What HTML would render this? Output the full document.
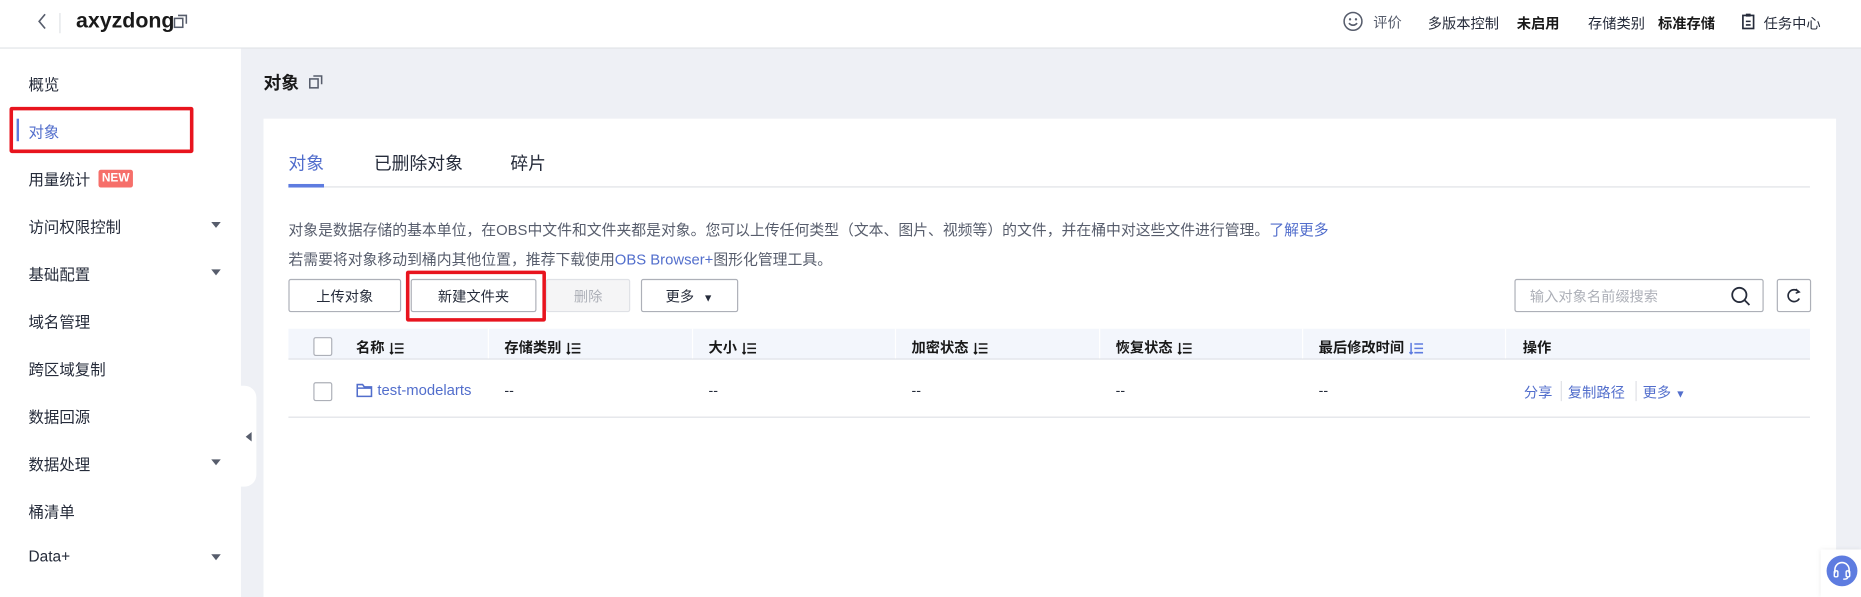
<!DOCTYPE html>
<html><head><meta charset="utf-8"><style>
html,body{margin:0;padding:0;width:1861px;height:597px;overflow:hidden;background:#eef0f5;}
#w{position:absolute;left:0;top:0;width:1568px;height:503px;transform:scale(1.18686);transform-origin:0 0;background:#eef0f5;font-family:"Liberation Sans","Noto Sans CJK SC",sans-serif;color:#252b3a;}
.a{position:absolute;white-space:nowrap;}
.hdr{left:0;top:0;width:1568px;height:40px;background:#fff;border-bottom:1px solid #dfe1e6;}
.side{left:0;top:41px;width:203px;height:462px;background:#fff;}
.si{position:absolute;left:24px;font-size:13px;color:#252b3a;}
.tri{position:absolute;left:178px;width:0;height:0;border-left:4px solid transparent;border-right:4px solid transparent;border-top:5px solid #575d6c;}
.card{left:222px;top:100px;width:1325px;height:403px;background:#fff;}
.btn{position:absolute;top:235px;height:28px;border:1px solid #adb0b8;border-radius:2px;background:#fff;font-size:12px;line-height:28px;text-align:center;color:#252b3a;box-sizing:border-box;}
.th{position:absolute;top:284px;font-size:12px;font-weight:bold;color:#191919;}
.dv{position:absolute;top:277px;width:1px;height:25px;background:#fff;}
.td{position:absolute;top:322px;font-size:12px;color:#252b3a;}
.lk{color:#526ecc;}
.sort{display:inline-block;vertical-align:middle;margin-left:4px;}
</style></head><body><div id="w">
<div class="a hdr"></div>
<svg class="a" style="left:30px;top:11px" width="12" height="14" viewBox="0 0 12 14"><path d="M8 1L3 7l5 6" fill="none" stroke="#575d6c" stroke-width="1.4"/></svg>
<div class="a" style="left:50px;top:11px;width:1px;height:17px;background:#dfe1e6"></div>
<div class="a" style="left:64px;top:7px;font-size:18px;font-weight:bold;color:#191919">axyzdong</div>
<svg class="a" style="left:146px;top:12px" width="12" height="12" viewBox="0 0 12 12"><rect x="1" y="3.5" width="7" height="7.5" fill="none" stroke="#575d6c" stroke-width="1.3"/><path d="M4 1h7v7" fill="none" stroke="#575d6c" stroke-width="1.3"/></svg>
<svg class="a" style="left:1131px;top:9px" width="18" height="18" viewBox="0 0 18 18"><circle cx="9" cy="9" r="7.5" fill="none" stroke="#575d6c" stroke-width="1.3"/><circle cx="6.5" cy="7.3" r="1" fill="#575d6c"/><circle cx="11.5" cy="7.3" r="1" fill="#575d6c"/><path d="M5.5 10.5q3.5 3.5 7 0" fill="none" stroke="#575d6c" stroke-width="1.3"/></svg>
<div class="a" style="left:1157px;top:10px;font-size:12px;color:#575d6c">评价</div>
<div class="a" style="left:1203px;top:11px;font-size:12px">多版本控制</div>
<div class="a" style="left:1278px;top:11px;font-size:12px;font-weight:bold;color:#191919">未启用</div>
<div class="a" style="left:1338px;top:11px;font-size:12px">存储类别</div>
<div class="a" style="left:1397px;top:11px;font-size:12px;font-weight:bold;color:#191919">标准存储</div>
<svg class="a" style="left:1467px;top:11px" width="12" height="14" viewBox="0 0 12 14"><rect x="1.5" y="2" width="9" height="11" fill="none" stroke="#252b3a" stroke-width="1.4"/><rect x="4" y="0.5" width="4" height="2.5" fill="#252b3a"/><path d="M4 7h4M4 10h4" stroke="#252b3a" stroke-width="1.3"/></svg>
<div class="a" style="left:1486px;top:11px;font-size:12px">任务中心</div>

<div class="a side"></div>
<div class="si" style="top:61px">概览</div>
<div class="a" style="left:14px;top:100px;width:2px;height:19px;background:#5e7ce0"></div>
<div class="si" style="top:101px;color:#526ecc">对象</div>
<div class="a" style="left:8px;top:90px;width:149px;height:33px;border:3px solid #e8141e;border-radius:2px"></div>
<div class="si" style="top:141px">用量统计</div>
<div class="a" style="left:83px;top:143px;width:29px;height:15px;background:#f66f6a;border-radius:2px;color:#fff;font-size:10px;font-weight:bold;line-height:15px;text-align:center">NEW</div>
<div class="si" style="top:181px">访问权限控制</div><div class="tri" style="top:187px"></div>
<div class="si" style="top:221px">基础配置</div><div class="tri" style="top:227px"></div>
<div class="si" style="top:261px">域名管理</div>
<div class="si" style="top:301px">跨区域复制</div>
<div class="si" style="top:341px">数据回源</div>
<div class="si" style="top:381px">数据处理</div><div class="tri" style="top:387px"></div>
<div class="si" style="top:421px">桶清单</div>
<div class="si" style="top:461px">Data+</div><div class="tri" style="top:467px"></div>
<div class="a" style="left:200px;top:325px;width:16px;height:85px;background:#fff;border-radius:0 10px 10px 0"></div>
<div class="a" style="left:207px;top:364px;width:0;height:0;border-top:4px solid transparent;border-bottom:4px solid transparent;border-right:5px solid #575d6c"></div>

<div class="a" style="left:222px;top:59px;font-size:15px;font-weight:bold;color:#191919">对象</div>
<svg class="a" style="left:260px;top:63px" width="12" height="12" viewBox="0 0 12 12"><rect x="1" y="3.5" width="7" height="7.5" fill="none" stroke="#575d6c" stroke-width="1.3"/><path d="M4 1h7v7" fill="none" stroke="#575d6c" stroke-width="1.3"/></svg>

<div class="a card"></div>
<div class="a" style="left:243px;top:127px;font-size:15px;color:#526ecc">对象</div>
<div class="a" style="left:315px;top:127px;font-size:15px;color:#252b3a">已删除对象</div>
<div class="a" style="left:430px;top:127px;font-size:15px;color:#252b3a">碎片</div>
<div class="a" style="left:243px;top:157px;width:1282px;height:1px;background:#dfe1e6"></div>
<div class="a" style="left:243px;top:155px;width:30px;height:3px;background:#5e7ce0"></div>
<div class="a" style="left:243px;top:183px;font-size:12.5px;color:#575d6c">对象是数据存储的基本单位，在OBS中文件和文件夹都是对象。您可以上传任何类型（文本、图片、视频等）的文件，并在桶中对这些文件进行管理。<span class="lk">了解更多</span></div>
<div class="a" style="left:243px;top:208px;font-size:12.5px;color:#575d6c">若需要将对象移动到桶内其他位置，推荐下载使用<span class="lk">OBS Browser+</span>图形化管理工具。</div>

<div class="btn" style="left:243px;width:95px">上传对象</div>
<div class="btn" style="left:346px;width:106px">新建文件夹</div>
<div class="a" style="left:342px;top:228px;width:112px;height:37px;border:3px solid #e8141e;border-radius:2px"></div>
<div class="btn" style="left:460px;width:71px;background:#f5f5f6;border-color:#dfe1e6;color:#adb0b8">删除</div>
<div class="btn" style="left:540px;width:82px">更多 <span style="font-size:9px;margin-left:4px">▼</span></div>
<div class="btn" style="left:1276px;width:210px;text-align:left;padding-left:12px;color:#adb0b8">输入对象名前缀搜索</div>
<svg class="a" style="left:1458px;top:241px" width="17" height="17" viewBox="0 0 17 17"><circle cx="7.5" cy="7.5" r="6" fill="none" stroke="#252b3a" stroke-width="1.5"/><path d="M12 12l4 4" stroke="#252b3a" stroke-width="1.5"/></svg>
<div class="btn" style="left:1497px;width:29px"></div>
<svg class="a" style="left:1505px;top:242px" width="13" height="14" viewBox="0 0 13 14"><path d="M10.5 4A5 5 0 1 0 11 9.5" fill="none" stroke="#252b3a" stroke-width="1.4"/><path d="M8 1.5l3 2.5-3 1" fill="none" stroke="#252b3a" stroke-width="1.2"/></svg>

<div class="a" style="left:243px;top:277px;width:1282px;height:25px;background:#f3f6fc;border-bottom:1px solid #dfe1e6"></div>
<div class="dv" style="left:411px"></div><div class="dv" style="left:583px"></div><div class="dv" style="left:754px"></div><div class="dv" style="left:926px"></div><div class="dv" style="left:1097px"></div><div class="dv" style="left:1268px"></div>
<div class="a" style="left:264px;top:284px;width:16px;height:16px;border:1px solid #adb0b8;border-radius:2px;background:#fff;box-sizing:border-box"></div>
<svg width="0" height="0" style="position:absolute"><defs><symbol id="s" viewBox="0 0 14 12"><path d="M2 1v10M0.5 9.5L2 11l1.5-1.5M5 2h8M5 6h8M5 10h8" fill="none" stroke="currentColor" stroke-width="1.4"/></symbol></defs></svg>
<div class="th" style="left:300px">名称<svg class="sort" width="13" height="11" style="color:#191919"><use href="#s"/></svg></div>
<div class="th" style="left:425px">存储类别<svg class="sort" width="13" height="11" style="color:#191919"><use href="#s"/></svg></div>
<div class="th" style="left:597px">大小<svg class="sort" width="13" height="11" style="color:#191919"><use href="#s"/></svg></div>
<div class="th" style="left:768px">加密状态<svg class="sort" width="13" height="11" style="color:#191919"><use href="#s"/></svg></div>
<div class="th" style="left:940px">恢复状态<svg class="sort" width="13" height="11" style="color:#191919"><use href="#s"/></svg></div>
<div class="th" style="left:1111px">最后修改时间<svg class="sort" width="13" height="11" style="color:#5e7ce0"><use href="#s"/></svg></div>
<div class="th" style="left:1283px">操作</div>

<div class="a" style="left:264px;top:322px;width:16px;height:16px;border:1px solid #adb0b8;border-radius:2px;background:#fff;box-sizing:border-box"></div>
<svg class="a" style="left:300px;top:323px" width="14" height="12" viewBox="0 0 14 12"><path d="M1 1h4.5l1.5 2H13v8H1z M1 4h12" fill="none" stroke="#526ecc" stroke-width="1.3"/></svg>
<div class="td lk" style="left:318px;font-size:12.5px">test-modelarts</div>
<div class="td" style="left:425px">--</div><div class="td" style="left:597px">--</div><div class="td" style="left:768px">--</div><div class="td" style="left:940px">--</div><div class="td" style="left:1111px">--</div>
<div class="td lk" style="left:1284px">分享</div>
<div class="a" style="left:1315px;top:321px;width:1px;height:17px;background:#dfe1e6"></div>
<div class="td lk" style="left:1321px">复制路径</div>
<div class="a" style="left:1378px;top:321px;width:1px;height:17px;background:#dfe1e6"></div>
<div class="td lk" style="left:1384px">更多 <span style="font-size:9px">▼</span></div>
<div class="a" style="left:243px;top:351px;width:1282px;height:1px;background:#dfe1e6"></div>

<div class="a" style="left:1534px;top:463px;width:34px;height:40px;background:#fff;box-shadow:0 0 4px rgba(0,0,0,.08)"></div>
<svg class="a" style="left:1538px;top:467px" width="28" height="28" viewBox="0 0 28 28"><circle cx="14" cy="14" r="13" fill="#5e7ce0"/><path d="M8 16v-3a6 6 0 0 1 12 0v3" fill="none" stroke="#fff" stroke-width="1.3"/><rect x="7.5" y="14" width="3" height="5" rx="1" fill="none" stroke="#fff" stroke-width="1.2"/><rect x="17.5" y="14" width="3" height="5" rx="1" fill="none" stroke="#fff" stroke-width="1.2"/><path d="M19 19q0 2-4 2" fill="none" stroke="#fff" stroke-width="1.2"/></svg>
</div></body></html>
